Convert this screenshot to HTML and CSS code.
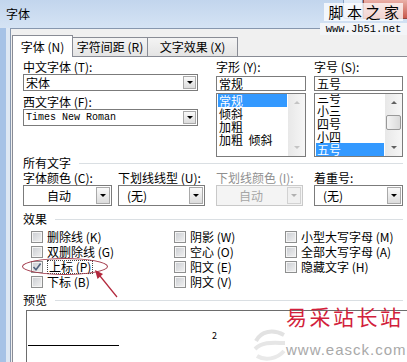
FILE: index.html
```html
<!DOCTYPE html>
<html>
<head>
    <title>字体</title>
    <link rel="stylesheet" href="styles.css">
</head>
<body>
    <div class="window">
        <div class="titlebar">
            <span class="title">字体</span>
            <div class="caption">
                <span class="cap-max"></span>
                <span class="cap-close"></span>
            </div>
        </div>
        <div class="frame">
            <div class="client">
                <div class="tabs">
                    <div class="tab active">字体 (N)</div>
                    <div class="tab tab-2">字符间距 (R)</div>
                    <div class="tab tab-3">文字效果 (X)</div>
                </div>
                <div class="page">
                    <div class="cols">
                        <div class="wide">
                            <div class="lbl">中文字体 (T):</div>
                            <div class="combo combo-font"><span class="combo-text">宋体</span><span class="dd-btn"></span></div>
                            <div class="lbl lbl-gap">西文字体 (F):</div>
                            <div class="combo combo-font"><span class="combo-text mono">Times New Roman</span><span class="dd-btn"></span></div>
                        </div>
                        <div class="field">
                            <div class="lbl">字形 (Y):</div>
                            <div class="text-input">常规</div>
                            <div class="listbox">
                                <div class="items">
                                    <div class="item selected">常规</div>
                                    <div class="item">倾斜</div>
                                    <div class="item">加粗</div>
                                    <div class="item">加粗&nbsp;&nbsp;倾斜</div>
                                </div>
                                <div class="scrollbar off">
                                    <span class="sb-btn up"></span>
                                    <span class="sb-track"></span>
                                    <span class="sb-btn down"></span>
                                </div>
                            </div>
                        </div>
                        <div class="field field-size">
                            <div class="lbl">字号 (S):</div>
                            <div class="text-input">五号</div>
                            <div class="listbox">
                                <div class="items scrolled">
                                    <div class="item">三号</div>
                                    <div class="item">小三</div>
                                    <div class="item">四号</div>
                                    <div class="item">小四</div>
                                    <div class="item selected">五号</div>
                                </div>
                                <div class="scrollbar">
                                    <span class="sb-btn up"></span>
                                    <span class="sb-track"><span class="sb-thumb"></span></span>
                                    <span class="sb-btn down"></span>
                                </div>
                            </div>
                        </div>
                    </div>

                    <div class="group">所有文字</div>
                    <div class="cols cols-color">
                        <div>
                            <div class="lbl">字体颜色 (C):</div>
                            <div class="combo tall w89 centered"><span class="combo-text">自动</span><span class="dd-btn"></span></div>
                        </div>
                        <div>
                            <div class="lbl">下划线线型 (U):</div>
                            <div class="combo tall w87"><span class="combo-text pad">(无)</span><span class="dd-btn"></span></div>
                        </div>
                        <div class="disabled">
                            <div class="lbl">下划线颜色 (I):</div>
                            <div class="combo tall w87 centered"><span class="combo-text">自动</span><span class="dd-btn"></span></div>
                        </div>
                        <div>
                            <div class="lbl">着重号:</div>
                            <div class="combo tall w89"><span class="combo-text pad">(无)</span><span class="dd-btn"></span></div>
                        </div>
                    </div>

                    <div class="group group-fx">效果</div>
                    <div class="effects">
                        <div class="chk"><span class="box"></span>删除线 (K)</div>
                        <div class="chk"><span class="box"></span>双删除线 (G)</div>
                        <div class="chk"><span class="box checked"><svg width="10" height="10" viewBox="0 0 10 10"><path d="M1.5 5 L4 7.8 L8.6 1.6" fill="none" stroke="#51647f" stroke-width="1.6"/></svg></span><span class="focus">上标 (P)</span></div>
                        <div class="chk"><span class="box"></span>下标 (B)</div>
                        <div class="chk"><span class="box"></span>阴影 (W)</div>
                        <div class="chk"><span class="box"></span>空心 (O)</div>
                        <div class="chk"><span class="box"></span>阳文 (E)</div>
                        <div class="chk"><span class="box"></span>阴文 (V)</div>
                        <div class="chk"><span class="box"></span>小型大写字母 (M)</div>
                        <div class="chk"><span class="box"></span>全部大写字母 (A)</div>
                        <div class="chk"><span class="box"></span>隐藏文字 (H)</div>
                    </div>

                    <div class="group group-pv">预览</div>
                    <div class="preview">
                        <span class="pv-line"></span>
                        <span class="pv-sup">2</span>
                    </div>
                </div>
            </div>
        </div>

        <!-- annotation over the dialog -->
        <div class="ring"></div>
        <svg class="arrow" width="407" height="362" viewBox="0 0 407 362">
            <line x1="117" y1="297" x2="100" y2="276" stroke="#b3283c" stroke-width="1.2"/>
            <polygon points="95,270 103,274 97.5,279" fill="#b3283c"/>
        </svg>

        <!-- watermarks -->
        <div class="wm-top">
            <div class="wm-cn">脚本之家</div>
            <div class="wm-url">www.Jb51.net</div>
        </div>
        <svg class="wm-logo" width="34" height="40" viewBox="0 0 34 40">
            <path d="M3 18 C8 8, 20 6, 31 12" fill="none" stroke="#e2e2e2" stroke-width="4"/>
            <path d="M2 26 C10 18, 22 20, 32 20" fill="none" stroke="#e6e6e6" stroke-width="4"/>
            <path d="M4 33 C12 38, 24 36, 31 28" fill="none" stroke="#e9e9e9" stroke-width="4"/>
        </svg>
        <div class="wm-bottom">
            <div class="wm-name">易采站长站</div>
            <div class="wm-site">www.easck.com</div>
        </div>
    </div>
</body>
</html>
```

FILE: styles.css
```css
* {
    box-sizing: border-box;
}

body {
    margin: 0;
    width: 407px;
    height: 362px;
    overflow: hidden;
    font-family: "Noto Sans CJK SC", "Liberation Sans", sans-serif;
    font-size: 12px;
    color: #000;
    background: #fff;
}

.window {
    position: relative;
    width: 420px;
    height: 362px;
    overflow: hidden;
    background: #dfe8f3;
}

.titlebar {
    display: flex;
    height: 28px;
    background: linear-gradient(#c2d5ed, #d5e3f4);
}

.title {
    padding-left: 6px;
    line-height: 28px;
}

.caption {
    display: flex;
    align-items: flex-start;
    margin-left: auto;
}

.cap-max {
    width: 20px;
    height: 19px;
    border: 1px solid #8ba3c4;
    border-top: 0;
    border-radius: 0 0 0 3px;
    background: linear-gradient(#e3ecf7, #c7d8ee);
}

.cap-close {
    width: 57px;
    height: 19px;
    border: 1px solid #93473f;
    border-top: 0;
    background: linear-gradient(#eab0a8, #c9594d);
}

.frame {
    display: flex;
    height: 334px;
    padding-left: 10px;
    background: linear-gradient(90deg, #a6c2e6 0, #a6c2e6 6px, #dde7f3 6px);
}

.client {
    flex: 1;
    border-top: 1px solid #8797ae;
    border-left: 1px solid #8797ae;
    background: #f0f0f0;
    padding: 6px 0 0 1px;
}

/* tabs */
.tabs {
    display: flex;
    align-items: flex-end;
    height: 21px;
    position: relative;
    z-index: 1;
}

.tab {
    height: 19px;
    line-height: 18px;
    text-align: center;
    white-space: nowrap;
    border: 1px solid #898c95;
    border-bottom: 0;
    background: linear-gradient(#f4f4f4, #e4e4e4);
    margin-left: -1px;
}

.tab.active {
    width: 61px;
    height: 22px;
    line-height: 21px;
    margin-left: 0;
    margin-bottom: -1px;
    background: #fff;
}

.tab-2 {
    width: 76px;
}

.tab-3 {
    width: 91px;
}

.page {
    width: 402px;
    height: 320px;
    border: 1px solid #898c95;
    background: #fff;
    padding: 3px 10px 0;
}

/* fields */
.cols {
    display: grid;
    grid-template-columns: 95px 98px 98px 89px;
}

.wide {
    grid-column: span 2;
}

.lbl {
    height: 14px;
    line-height: 14px;
    white-space: nowrap;
}

.lbl-gap {
    margin-top: 4px;
}

.combo {
    display: flex;
    align-items: center;
    height: 17px;
    border: 1px solid #7b7b7b;
    background: #fff;
    padding: 0 1px 0 2px;
}

.combo-font {
    width: 175px;
}

.combo-text {
    flex: 1;
    line-height: 14px;
    white-space: nowrap;
}

.mono {
    font-family: "Liberation Mono", monospace;
    font-size: 10px;
}

.dd-btn {
    display: flex;
    align-items: center;
    justify-content: center;
    width: 13px;
    height: 13px;
    border: 1px solid #a9a9a9;
    background: linear-gradient(#fafafa, #dcdcdc);
}

.dd-btn::after {
    content: "";
    border-left: 3px solid transparent;
    border-right: 3px solid transparent;
    border-top: 3px solid #000;
}

.combo.tall {
    height: 21px;
}

.combo.tall .dd-btn {
    width: 14px;
    height: 17px;
}

.w89 {
    width: 89px;
}

.w87 {
    width: 87px;
}

.centered .combo-text {
    text-align: center;
    padding-right: 4px;
}

.pad {
    padding-left: 6px;
}

.disabled {
    color: #8f8f8f;
}

.disabled .combo {
    border-color: #c9c9c9;
    background: #f4f4f4;
    color: #a6a6a6;
}

.disabled .dd-btn {
    border-color: #d2d2d2;
    background: #f0f0f0;
}

.disabled .dd-btn::after {
    border-top-color: #b0b0b0;
}

.text-input {
    width: 90px;
    height: 15px;
    margin-top: 2px;
    border: 1px solid #7b7b7b;
    padding-left: 2px;
    line-height: 13px;
}

.field-size .text-input,
.field-size .listbox {
    width: 89px;
}

.listbox {
    display: flex;
    width: 90px;
    height: 64px;
    margin-top: 2px;
    border: 1px solid #7b7b7b;
    background: #fff;
}

.items {
    flex: 1;
    padding: 0 1px;
    overflow: hidden;
}

.items.scrolled .item:first-child {
    margin-top: -3px;
}

.item {
    height: 13px;
    line-height: 13px;
    padding-left: 1px;
    white-space: nowrap;
}

.item.selected {
    background: #3399ff;
    color: #fff;
}

.scrollbar {
    display: flex;
    flex-direction: column;
    width: 17px;
    background: linear-gradient(90deg, #e8e8e8, #f6f6f6);
}

.sb-btn {
    display: flex;
    align-items: center;
    justify-content: center;
    height: 17px;
}

.sb-btn.up::after {
    content: "";
    border-left: 3px solid transparent;
    border-right: 3px solid transparent;
    border-bottom: 3px solid #606060;
}

.sb-btn.down::after {
    content: "";
    border-left: 3px solid transparent;
    border-right: 3px solid transparent;
    border-top: 3px solid #606060;
}

.scrollbar.off .sb-btn.up::after {
    border-bottom-color: #c4c4c4;
}

.scrollbar.off .sb-btn.down::after {
    border-top-color: #c4c4c4;
}

.sb-track {
    flex: 1;
    padding: 4px 1px 0;
}

.sb-thumb {
    display: block;
    height: 15px;
    border: 1px solid #999;
    border-radius: 2px;
    background: linear-gradient(90deg, #f4f4f4, #dadada);
}

/* group headings */
.group {
    display: flex;
    align-items: center;
    gap: 8px;
    height: 12px;
    line-height: 12px;
}

.group::after {
    content: "";
    flex: 1;
    border-top: 1px solid #dadfe3;
}

.cols-color {
    margin-top: 2px;
}

.group-fx {
    margin-top: 7px;
}

.effects {
    display: grid;
    grid-template-columns: 143px 111px 1fr;
    grid-template-rows: repeat(4, 15px);
    grid-auto-flow: column;
    margin-top: 4px;
    padding-left: 8px;
}

.chk {
    display: flex;
    align-items: center;
    gap: 4px;
    white-space: nowrap;
    line-height: 14px;
}

.box {
    display: flex;
    align-items: center;
    justify-content: center;
    width: 12px;
    height: 12px;
    border: 1px solid #8e8f8f;
    box-shadow: inset 0 0 0 1px #f4f4f4;
    background: linear-gradient(135deg, #c9ccd1, #f2f2f2);
}

.focus {
    border: 1px dotted #444;
    padding: 0 1px;
    line-height: 12px;
}

.group-pv {
    margin-top: 5px;
}

.preview {
    display: flex;
    align-items: flex-start;
    height: 80px;
    margin: 4px -40px 0 3px;
    border: 1px solid #6d6d6d;
}

.pv-line {
    width: 91px;
    margin: 34px 0 0 1px;
    border-top: 1px solid #000;
}

.pv-sup {
    margin: 19px 0 0 93px;
    font-size: 9px;
    line-height: 12px;
}

/* annotation */
.ring {
    position: absolute;
    left: 22px;
    top: 258px;
    width: 86px;
    height: 17px;
    border: 1.5px solid #a33a4b;
    border-radius: 50%;
}

.arrow {
    position: absolute;
    left: 0;
    top: 0;
}

/* watermarks */
.wm-top {
    position: absolute;
    left: 320px;
    top: 3px;
    width: 87px;
    text-align: center;
}

.wm-cn {
    display: inline-block;
    font-size: 15px;
    line-height: 18px;
    letter-spacing: 3.5px;
    padding-left: 4px;
    background: rgba(255, 255, 255, 0.75);
}

.wm-url {
    margin-top: 2px;
    font-family: "Liberation Mono", monospace;
    font-size: 10.5px;
    line-height: 12px;
    background: #f3f5f8;
}

.wm-logo {
    position: absolute;
    left: 253px;
    top: 323px;
}

.wm-bottom {
    position: absolute;
    left: 286px;
    top: 302px;
}

.wm-name {
    font-size: 21px;
    line-height: 28px;
    letter-spacing: 2.5px;
    color: #d21f3c;
}

.wm-site {
    margin-top: 12px;
    font-family: "Liberation Sans", sans-serif;
    font-size: 15px;
    line-height: 16px;
    letter-spacing: 1px;
    color: #a9a9a9;
}
```
